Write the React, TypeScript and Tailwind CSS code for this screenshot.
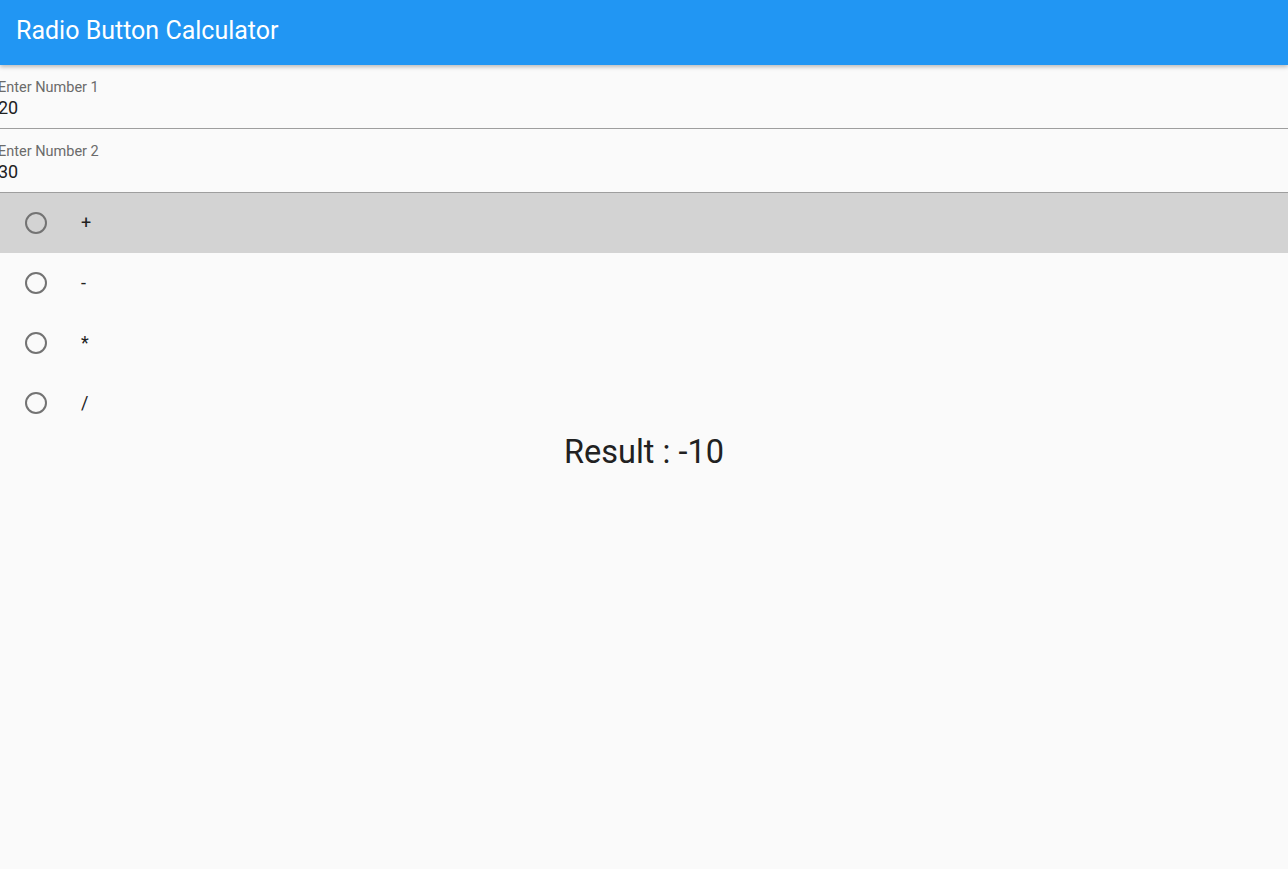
import React from "react";

function Field({ label, value }: { label: string; value: string }) {
  return (
    <div className="h-16 border-b border-[#9e9e9e] flex flex-col justify-end pb-[8px]">
      <div className="-ml-[2px] text-[14.5px] leading-[16px] text-[#6b6b6b]">{label}</div>
      <div className="-ml-[2px] text-[18px] leading-[24px] text-[#212121]">{value}</div>
    </div>
  );
}

function RadioRow({ label, active }: { label: string; active?: boolean }) {
  return (
    <div className={"h-[60px] flex items-center " + (active ? "bg-[#d3d3d3]" : "")}>
      <div className="w-[72px] flex justify-center">
        <div className="w-[22px] h-[22px] rounded-full border-2 border-[#737373]" />
      </div>
      <div className="ml-[9px] -mt-[2px] text-[18px] text-[#212121]">{label}</div>
    </div>
  );
}

export default function App() {
  return (
    <div className="w-[1288px] h-[869px] bg-[#fafafa] overflow-hidden" style={{ fontFamily: "Roboto, sans-serif" }}>
      <div className="h-[65px] bg-[#2196f3] flex items-center pl-4 shadow-[0_2px_4px_rgba(0,0,0,0.25)] relative z-10">
        <span className="text-white text-[25px] -mt-[4px]">Radio Button Calculator</span>
      </div>
      <Field label="Enter Number 1" value="20" />
      <Field label="Enter Number 2" value="30" />
      <RadioRow label="+" active />
      <RadioRow label="-" />
      <RadioRow label="*" />
      <RadioRow label="/" />
      <div className="text-center text-[32.5px] leading-[38px] text-[#212121]">Result : -10</div>
    </div>
  );
}
